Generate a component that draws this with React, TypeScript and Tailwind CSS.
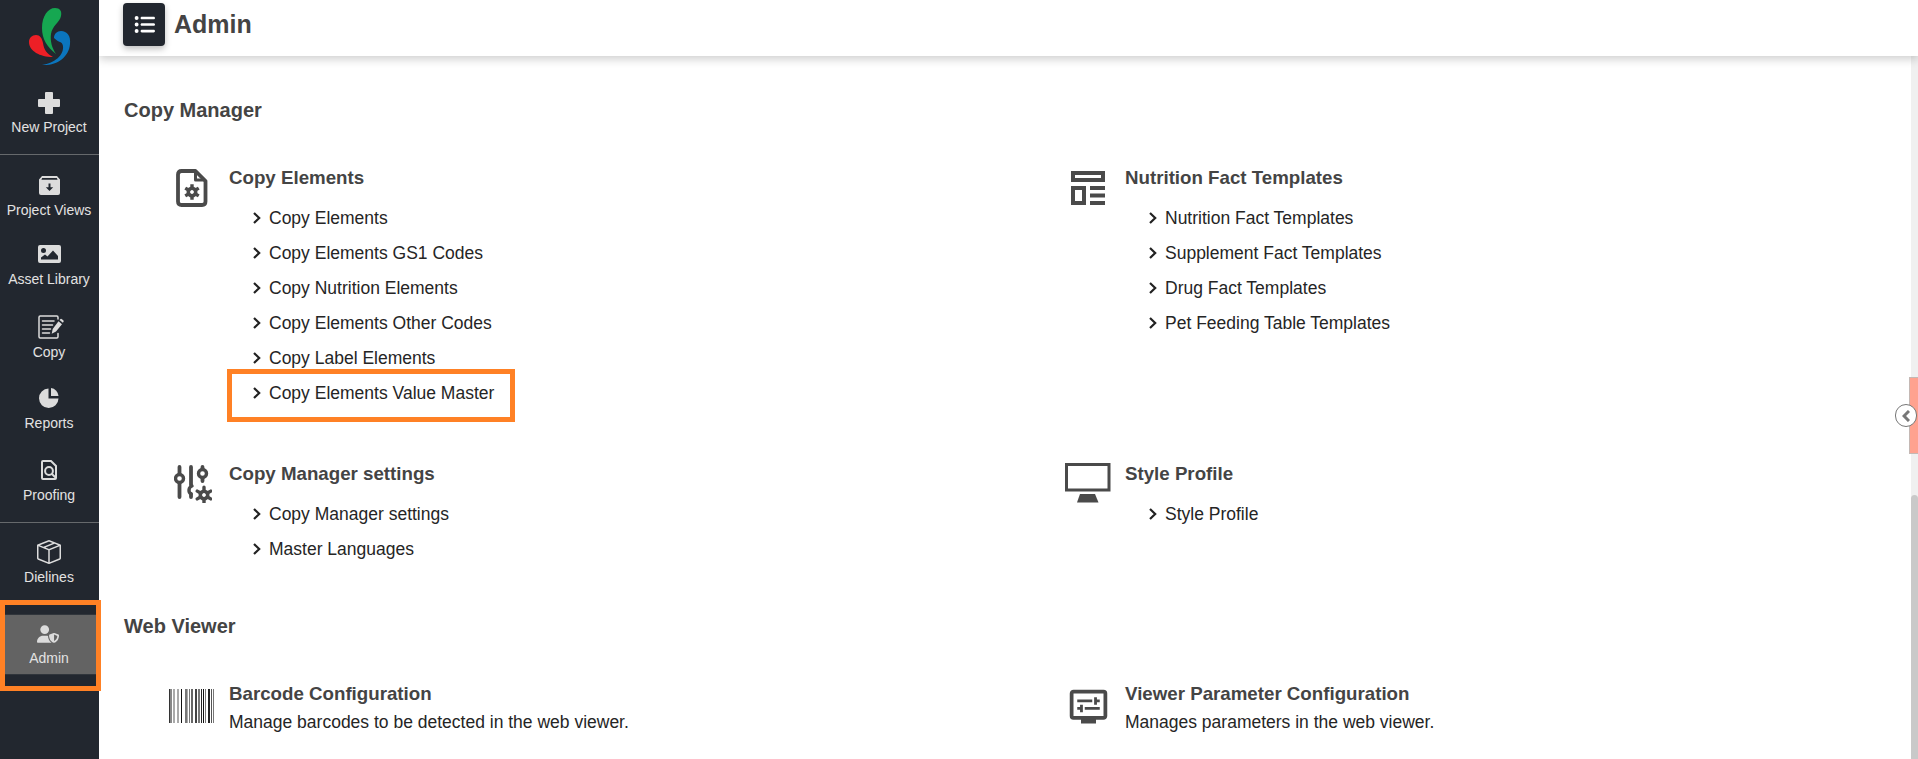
import type { ReactNode } from "react";
import { BsBoxSeam } from "react-icons/bs";
import { FaListUl, FaUserShield } from "react-icons/fa6";
import { MdDisplaySettings } from "react-icons/md";

type SectionProps = {
  icon: ReactNode;
  title: string;
  links?: string[];
  text?: string;
  marked?: string;
};

function Logo() {
  return (
    <svg width="42" height="58" viewBox="0 0 42 58">
      <path fill="#16a751" d="M27 46C18 39 13 31 13 20C13 8 19 0 26 0C31 0 33 3 32 8C31 14 23 18 22 26C21 33 23 40 27 46Z" />
      <path fill="#ed1f26" d="M24 49C11 49 0 43 0 34C0 30 3 27 7 27C11 27 13 30 14 35C15 42 18 46 24 49Z" />
      <path fill="#0b75bd" d="M25 30C25 26 28 23 32 23C38 23 42 28 41 36C40 49 28 58 13 57C26 55 35 47 34 38C33 33 30 35 25 30Z" />
    </svg>
  );
}

function PlusIcon() {
  return (
    <svg width="22" height="22" viewBox="0 0 22 22" fill="currentColor">
      <path d="M8 0h6a1 1 0 0 1 1 1v6h6a1 1 0 0 1 1 1v6a1 1 0 0 1-1 1h-6v6a1 1 0 0 1-1 1H8a1 1 0 0 1-1-1v-6H1a1 1 0 0 1-1-1V8a1 1 0 0 1 1-1h6V1a1 1 0 0 1 1-1Z" />
    </svg>
  );
}

function ArchiveIcon() {
  return (
    <svg width="21" height="19" viewBox="0 0 21 19" fill="currentColor">
      <path fillRule="evenodd" d="M3 0H18L21 3.500V17Q21 19 19 19H2Q0 19 0 17V3.500ZM3.200 2L2.400 3.800H18.600L17.800 2ZM9.500 7.500V11.200H6.800L10.500 15L14.200 11.200H11.500V7.500Z" />
    </svg>
  );
}

function ImageIcon() {
  return (
    <svg width="23" height="18" viewBox="0 0 23 18" fill="currentColor">
      <path fillRule="evenodd" d="M2 0H21Q23 0 23 2V16Q23 18 21 18H2Q0 18 0 16V2Q0 0 2 0ZM5.500 3A2.500 2.500 0 1 0 5.500 8A2.500 2.500 0 1 0 5.500 3ZM3 14.500H20V11L15 5.500L9.500 11.500L7 9.500L3 12.500Z" />
    </svg>
  );
}

function CopyIcon() {
  return (
    <svg width="26" height="24" viewBox="0 0 26 24" fill="none" stroke="currentColor" strokeWidth="1.500" strokeLinecap="round">
      <path d="M20 4V2.200A1.200 1.200 0 0 0 18.800 1H2.200A1.200 1.200 0 0 0 1 2.200V21.800A1.200 1.200 0 0 0 2.200 23H18.800A1.200 1.200 0 0 0 20 21.800V18.500" />
      <path d="M4.500 6H16M4.500 10H14.500M4.500 14H12.500M4.500 18H11.500" />
      <path fill="currentColor" stroke="none" d="M20.500 6.300L24 9.200L18 16.600L13.700 18.800L14.700 14ZM21.500 5L22.500 4Q23.200 3.500 24 4.200L25.500 5.400Q26 6 25.500 6.800L24.900 7.800Z" />
    </svg>
  );
}

function PieIcon() {
  return (
    <svg width="20" height="20" viewBox="0 0 20 20" fill="currentColor">
      <path d="M9.500 .5V10.500H19.500A9.750 9.750 0 1 1 9.500 .5Z" />
      <path d="M12 0A8.500 8.500 0 0 1 19.500 8H12Z" />
    </svg>
  );
}

function ProofIcon() {
  return (
    <svg width="16" height="20" viewBox="0 0 16 20" fill="none" stroke="currentColor" strokeWidth="2">
      <path d="M2 1H10L15 6V18Q15 19 14 19H2Q1 19 1 18V2Q1 1 2 1Z" />
      <circle cx="8" cy="11" r="3.900" />
      <path d="M10.700 13.800L15 18" />
    </svg>
  );
}

// six-toothed cog centred on the origin
function Cog({ transform }: { transform: string }) {
  return (
    <g transform={transform} fill="none" stroke="currentColor">
      <circle r="3.700" strokeWidth="3.600" />
      <path strokeWidth="3.400" d="M0-4.500V-7.800M0 4.500V7.800M3.900-2.250L6.750-3.900M-3.900 2.250L-6.750 3.900M-3.900-2.250L-6.750-3.900M3.900 2.250L6.750 3.900" />
    </g>
  );
}

function FileCogIcon() {
  return (
    <svg className="relative -top-[2px]" width="32" height="38" viewBox="0 0 32 38" fill="none" stroke="currentColor" strokeWidth="3.800" strokeLinejoin="round">
      <path d="M5.500 2H19.500L29.500 12V32.500Q29.500 36 26 36H5.500Q2 36 2 32.500V5.500Q2 2 5.500 2Z" />
      <path strokeWidth="3" d="M19.500 2V11H29" />
      <Cog transform="translate(16 23)" />
    </svg>
  );
}

function SlidersIcon() {
  return (
    <svg className="relative -top-[2px] left-px" width="38" height="38" viewBox="0 0 38 38" fill="none" stroke="currentColor" strokeWidth="3.800" strokeLinecap="round">
      <path d="M5.500 2V9M5.500 18V32M17 2V20M17 29V32M28.500 2V4M28.500 13V16" />
      <circle cx="5.500" cy="13.500" r="4" strokeWidth="3.400" />
      <circle cx="28.500" cy="8.500" r="4" strokeWidth="3.400" />
      <path strokeWidth="3.400" d="M18 21A4.500 4.500 0 0 0 17 29" />
      <Cog transform="translate(30 30)" />
    </svg>
  );
}

function TemplateIcon() {
  return (
    <svg className="relative -top-[2px]" width="34" height="34" viewBox="0 0 34 34" fill="none" stroke="currentColor" strokeWidth="4">
      <path d="M2 2H32V9H2ZM2 17H13V32H2Z" />
      <path d="M19 17H34M19 24.500H34M19 32H34" />
    </svg>
  );
}

function MonitorIcon() {
  return (
    <svg className="relative -top-[3px]" width="46" height="40" viewBox="0 0 46 40" fill="currentColor">
      <path fillRule="evenodd" d="M0 0H45.500V28.500H0ZM3 3V25.500H42.500V3Z" />
      <path d="M15 31H30L33.500 39.500H12Z" />
    </svg>
  );
}

function BarcodeIcon() {
  // [x, width, shade]
  const bars = [
    [0, 1, "#333"], [1, 2, "#888"], [4, 2, "#aaa"], [8, 2, "#aaa"], [12, 1, "#111"],
    [16, 2, "#777"], [18, 1, "#aaa"], [19.5, 1, "#777"], [22, 1.5, "#666"], [26, 1.5, "#444"],
    [29, 2, "#777"], [32, 1, "#222"], [33.5, 1.5, "#111"], [36, 1, "#777"], [39, 2, "#222"],
    [42, 1, "#555"], [43.5, 1.5, "#777"],
  ] as const;
  return (
    <svg className="mr-[2px]" width="45" height="34" viewBox="0 0 45 34" shapeRendering="crispEdges">
      {bars.map(([x, w, fill]) => (
        <rect key={x} x={x} width={w} height="34" fill={fill} />
      ))}
    </svg>
  );
}

function Chevron() {
  return (
    <svg className="mb-[2px]" width="8" height="12" viewBox="0 0 8 12" fill="none" stroke="#222" strokeWidth="2.200">
      <path d="M1 1L6.200 6L1 11" />
    </svg>
  );
}

function NavItem({ icon, label, className }: { icon: ReactNode; label: string; className: string }) {
  return (
    <a className={`flex w-full flex-col items-center whitespace-nowrap pr-px text-[14px] leading-4 text-[#e2e2e2] ${className}`}>
      <span className="flex h-6 items-center justify-center text-[#dcdcdc]">{icon}</span>
      <span>{label}</span>
    </a>
  );
}

function Section({ icon, title, links, text, marked }: SectionProps) {
  return (
    <section className="flex items-start pl-11 text-[#4a4a4a]">
      <div className="flex h-12 w-12 shrink-0 items-center justify-center">{icon}</div>
      <div className="pl-[13px]">
        <h3 className="text-[18.72px] font-bold leading-6 text-[#444]">{title}</h3>
        {text && <p className="mt-1 text-[17.5px] leading-6 text-[#252525]">{text}</p>}
        {links && (
          <ul className="mt-[11px] pl-6 text-[17.5px] leading-[35px] text-[#252525]">
            {links.map((link) => (
              <li key={link} className="relative flex items-center gap-2">
                <Chevron />
                {link}
                {link === marked && (
                  <span className="absolute -left-[26px] -top-[7px] h-[53px] w-[288px] border-[5px] border-[#ff8125]" />
                )}
              </li>
            ))}
          </ul>
        )}
      </div>
    </section>
  );
}

export default function App() {
  return (
    <div className="flex h-[759px] w-[1918px] overflow-hidden bg-white font-['Liberation_Sans',Arial,sans-serif]">
      <nav className="relative z-10 flex w-[99px] shrink-0 flex-col items-center bg-[#22272f] pt-2">
        <Logo />
        <NavItem className="mt-[25px] h-[63px] gap-1" icon={<PlusIcon />} label="New Project" />
        <hr className="w-full border-[#66696c]" />
        <NavItem className="mt-[18px] h-[52px] gap-[5px]" icon={<ArchiveIcon />} label="Project Views" />
        <NavItem className="mt-[17px] h-[52px] gap-[5px]" icon={<ImageIcon />} label="Asset Library" />
        <NavItem className="mt-[21px] h-[52px] gap-[5px]" icon={<span className="ml-1"><CopyIcon /></span>} label="Copy" />
        <NavItem className="mt-[19px] h-[52px] gap-[5px]" icon={<PieIcon />} label="Reports" />
        <NavItem className="mt-5 h-[64px] gap-[5px]" icon={<ProofIcon />} label="Proofing" />
        <hr className="w-full border-[#66696c]" />
        <NavItem className="mt-[17px] h-[52px] gap-[5px]" icon={<BsBoxSeam size={24} />} label="Dielines" />
        <NavItem
          className="mt-[22px] h-[61px] gap-1 border-y border-[#30353b] bg-[#636363] pt-[7px]"
          icon={<span className="mr-[2px]"><FaUserShield size={22} /></span>}
          label="Admin"
        />
        <div className="absolute left-0 top-[600px] h-[91px] w-[101px] border-[5px] border-[#ff8125]" />
      </nav>

      <div className="flex min-w-0 flex-1 flex-col">
        <header className="relative z-[5] flex h-14 shrink-0 items-start bg-white pl-6 pt-[3px] shadow-[0_3px_9px_rgba(0,0,0,0.2)]">
          <button className="flex h-[43px] w-[42px] items-center justify-center rounded-[4px] bg-[#22272f] text-white shadow-[0_3px_6px_rgba(0,0,0,0.25)]">
            <FaListUl size={21} />
          </button>
          <h1 className="ml-[9px] mt-[5px] text-[25px] font-bold leading-8 text-[#444]">Admin</h1>
        </header>

        <div className="flex min-h-0 flex-1">
          <main className="w-[1812px] shrink-0 pl-[25px]">
            <h2 className="mt-[42px] text-[20px] font-bold leading-6 text-[#444]">Copy Manager</h2>
            <div className="mt-11 grid grid-cols-[896px_890px]">
              <div className="h-[296px]">
                <Section
                  icon={<FileCogIcon />}
                  title="Copy Elements"
                  links={[
                    "Copy Elements",
                    "Copy Elements GS1 Codes",
                    "Copy Nutrition Elements",
                    "Copy Elements Other Codes",
                    "Copy Label Elements",
                    "Copy Elements Value Master",
                  ]}
                  marked="Copy Elements Value Master"
                />
              </div>
              <Section
                icon={<TemplateIcon />}
                title="Nutrition Fact Templates"
                links={[
                  "Nutrition Fact Templates",
                  "Supplement Fact Templates",
                  "Drug Fact Templates",
                  "Pet Feeding Table Templates",
                ]}
              />
              <Section
                icon={<SlidersIcon />}
                title="Copy Manager settings"
                links={["Copy Manager settings", "Master Languages"]}
              />
              <Section icon={<MonitorIcon />} title="Style Profile" links={["Style Profile"]} />
            </div>
            <h2 className="mt-[47px] text-[20px] font-bold leading-6 text-[#444]">Web Viewer</h2>
            <div className="mt-11 grid grid-cols-[896px_890px]">
              <Section
                icon={<BarcodeIcon />}
                title="Barcode Configuration"
                text="Manage barcodes to be detected in the web viewer."
              />
              <Section
                icon={<MdDisplaySettings size={45} />}
                title="Viewer Parameter Configuration"
                text="Manages parameters in the web viewer."
              />
            </div>
          </main>

          <div className="relative w-[7px] shrink-0 bg-[#f0f0f0] pt-[439px]">
            <div className="h-[264px] rounded-t-[4px] bg-[#c9c9c9]" />
            <div className="absolute -left-[2px] top-[321px] h-[77px] w-[10px] border border-[#c4b8b4] bg-[#ffa28f]" />
            <div className="absolute -left-4 top-[348px] flex h-[23px] w-[22px] items-center justify-center rounded-full border border-[#777] bg-white">
              <svg width="8" height="12" viewBox="0 0 8 12" fill="none" stroke="#777" strokeWidth="3">
                <path d="M7 1L2 6L7 11" />
              </svg>
            </div>
          </div>
        </div>
      </div>
    </div>
  );
}
